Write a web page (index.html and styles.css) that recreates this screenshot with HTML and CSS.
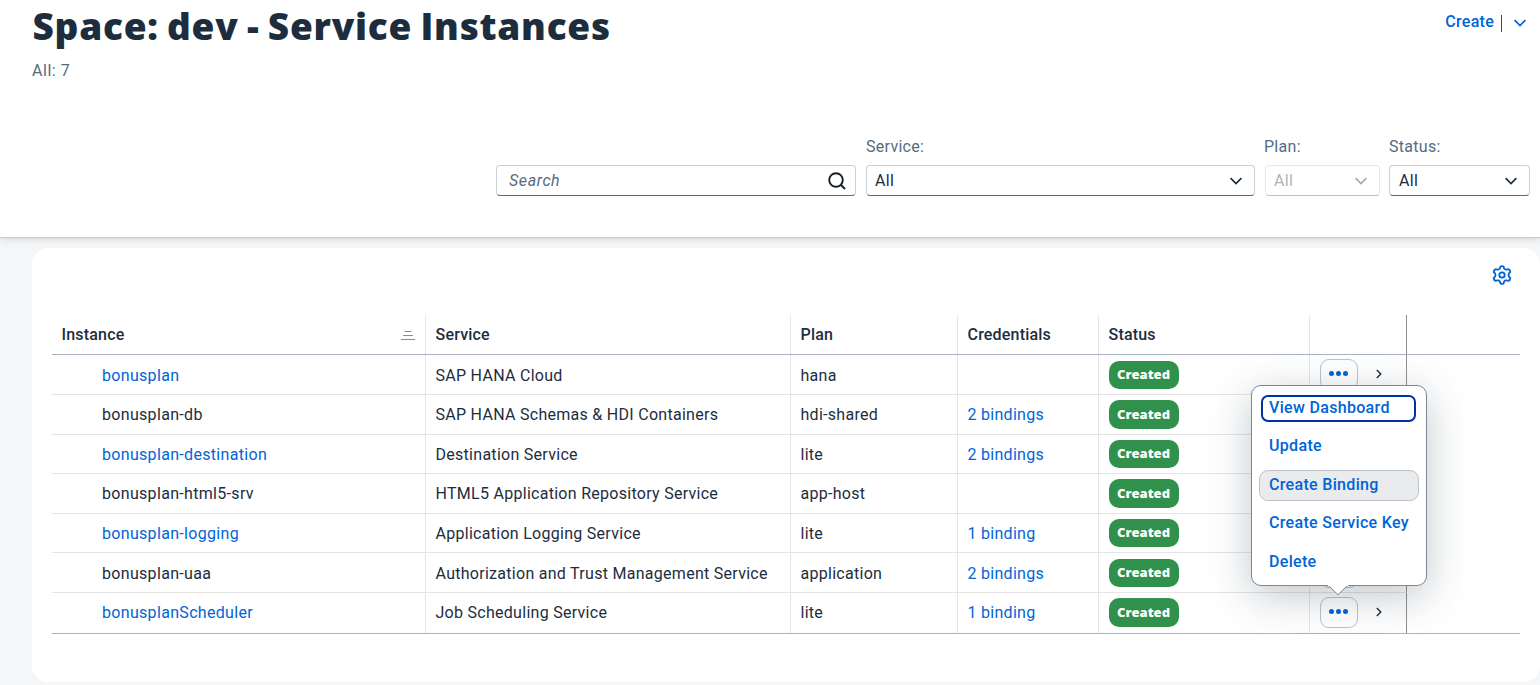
FILE: index.html
```
<!DOCTYPE html>
<html lang="en">
<head>
<meta charset="utf-8">
<title>Space: dev - Service Instances</title>
<link rel="stylesheet" href="styles.css">
</head>
<body>
<header class="page-header">
  <div class="title-row">
    <h1 class="title">Space: dev - Service Instances</h1>
    <div class="create">
      <span class="create-label">Create</span><span class="create-divider"></span>
      <svg class="create-arrow" width="14" height="8" viewBox="0 0 14 8"><path d="M1.6 1.2 7 6.6 12.4 1.2"/></svg>
    </div>
  </div>
  <div class="count">All: 7</div>
  <div class="filters">
    <div class="field search"><span class="placeholder">Search</span>
      <svg class="search-icon" width="18" height="18" viewBox="0 0 18 18"><circle cx="8" cy="8" r="6.8"/><path d="M13 13l4 4"/></svg>
    </div>
    <div class="filter service"><label class="label">Service:</label><div class="field"><span>All</span><svg class="chevron" width="14" height="8" viewBox="0 0 14 8"><path d="M1.6 1.2 7 6.6 12.4 1.2"/></svg></div></div>
    <div class="filter plan"><label class="label">Plan:</label><div class="field disabled"><span>All</span><svg class="chevron" width="14" height="8" viewBox="0 0 14 8"><path d="M1.6 1.2 7 6.6 12.4 1.2"/></svg></div></div>
    <div class="filter status"><label class="label">Status:</label><div class="field"><span>All</span><svg class="chevron" width="14" height="8" viewBox="0 0 14 8"><path d="M1.6 1.2 7 6.6 12.4 1.2"/></svg></div></div>
  </div>
</header>
<main class="panel">
  <div class="toolbar">
    <svg class="gear" width="20" height="20" viewBox="0 0 20 20"><path d="M8.3 1.8 Q10 .4 11.7 1.8 L12.1 3.6 Q13 4.9 14.5 4.6 L16.2 4.1 Q18.2 4.8 18.3 6.9 L17 8.4 Q16 10 17 11.6 L18.3 13.1 Q18.2 15.2 16.2 15.9 L14.5 15.4 Q13 15.1 12.1 16.4 L11.7 18.2 Q10 19.6 8.3 18.2 L7.9 16.4 Q7 15.1 5.5 15.4 L3.8 15.9 Q1.8 15.2 1.7 13.1 L3 11.6 Q4 10 3 8.4 L1.7 6.9 Q1.8 4.8 3.8 4.1 L5.5 4.6 Q7 4.9 7.9 3.6Z"/><circle cx="10" cy="10" r="2.7"/></svg>
  </div>
  <div class="table">
    <div class="row head"><div class="cell">Instance<svg class="sort" width="14" height="9" viewBox="0 0 14 9"><path d="M3.5.5h7M2 4.5h10M0 8.5h14"/></svg></div><div class="cell">Service</div><div class="cell">Plan</div><div class="cell">Credentials</div><div class="cell">Status</div><div class="cell"></div></div>
    <div class="row low"><div class="cell name link">bonusplan</div><div class="cell">SAP HANA Cloud</div><div class="cell">hana</div><div class="cell link"></div><div class="cell state"><span class="tag">Created</span></div><div class="cell actions"><span class="more"><i></i><i></i><i></i></span><svg class="nav" width="6" height="10" viewBox="0 0 6 10"><path d="M.8 1 4.8 5 .8 9"/></svg></div></div>
    <div class="row"><div class="cell name">bonusplan-db</div><div class="cell">SAP HANA Schemas &amp; HDI Containers</div><div class="cell">hdi-shared</div><div class="cell link">2 bindings</div><div class="cell state"><span class="tag tall">Created</span></div><div class="cell"></div></div>
    <div class="row short low"><div class="cell name link">bonusplan-destination</div><div class="cell">Destination Service</div><div class="cell">lite</div><div class="cell link">2 bindings</div><div class="cell state"><span class="tag">Created</span></div><div class="cell"></div></div>
    <div class="row"><div class="cell name">bonusplan-html5-srv</div><div class="cell">HTML5 Application Repository Service</div><div class="cell">app-host</div><div class="cell link"></div><div class="cell state"><span class="tag tall">Created</span></div><div class="cell"></div></div>
    <div class="row short low"><div class="cell name link">bonusplan-logging</div><div class="cell">Application Logging Service</div><div class="cell">lite</div><div class="cell link">1 binding</div><div class="cell state"><span class="tag">Created</span></div><div class="cell"></div></div>
    <div class="row low"><div class="cell name">bonusplan-uaa</div><div class="cell">Authorization and Trust Management Service</div><div class="cell">application</div><div class="cell link">2 bindings</div><div class="cell state"><span class="tag">Created</span></div><div class="cell actions"><span class="more"></span></div></div>
    <div class="row last"><div class="cell name link">bonusplanScheduler</div><div class="cell">Job Scheduling Service</div><div class="cell">lite</div><div class="cell link">1 binding</div><div class="cell state"><span class="tag tall">Created</span></div><div class="cell actions"><span class="more"><i></i><i></i><i></i></span><svg class="nav" width="6" height="10" viewBox="0 0 6 10"><path d="M.8 1 4.8 5 .8 9"/></svg></div></div>
  </div>
</main>
<div class="popover">
  <div class="item focused">View Dashboard</div>
  <div class="item">Update</div>
  <div class="item hovered">Create Binding</div>
  <div class="item">Create Service Key</div>
  <div class="item">Delete</div>
  <svg class="pointer" width="20" height="11" viewBox="0 0 20 11"><path class="pointer-fill" d="M0 0H20V1H18.5L10 9.5 1.5 1H0Z"/><path class="pointer-line" d="M1.3 1.3 10 9.8 18.7 1.3"/></svg>
</div>
</body>
</html>
```
FILE: styles.css
```
* { box-sizing: border-box; }
body { margin: 0; width: 1540px; height: 685px; overflow: hidden; position: relative; background: #f5f6f7; color: #1d2d3e; font: 16px/20px Roboto, "Liberation Sans", sans-serif; letter-spacing: .28px; white-space: nowrap; }
svg { display: block; fill: none; flex: none; }
.page-header { height: 237px; background: #fff; box-shadow: 0 1px 1px #c9cdd2, 0 2px 8px rgba(34,53,72,.16); padding: 0 10px 0 32px; position: relative; }
.title-row { display: flex; justify-content: space-between; height: 60px; }
.title { margin: 4px 0 0 .5px; font: 800 37px/44px "Open Sans", sans-serif; letter-spacing: .75px; word-spacing: -2px; }
.create { display: flex; align-items: center; height: 22px; margin-top: 11px; padding-right: 3px; color: #0064d9; font-weight: 500; }
.create-divider { width: 1px; height: 17px; margin: 3px 11px 0 7px; background: #0057b8; }
.create-arrow { stroke: #0064d9; stroke-width: 1.8; margin-top: 2px; }
.count { height: 20px; padding-top: 1px; color: #556b82; letter-spacing: .55px; }
.filters { display: flex; align-items: flex-end; justify-content: flex-end; margin-top: 56px; height: 60px; }
.label { display: block; height: 28px; color: #556b82; }
.filter { margin-left: 10px; }
.service { width: 389px; }
.plan { width: 115px; }
.plan .label { margin-left: -1px; }
.status { width: 141px; margin-left: 9px; }
.field { display: flex; align-items: center; justify-content: space-between; height: 31px; padding: 0 11px 0 8px; background: #fff; border: 1px solid #c8d0d9; border-bottom-color: #556b82; border-radius: 4px; }
.status .field { padding-left: 9px; }
.search { width: 360px; padding: 0 9px 0 12px; }
.placeholder { color: #556b82; font-style: italic; letter-spacing: .6px; }
.chevron { stroke: #1d2d3e; stroke-width: 1.7; }
.search-icon { stroke: #131e29; stroke-width: 1.9; }
.disabled { color: #b0b3b7; border-color: #e6e9ec; border-bottom-color: #b8c0c8; }
.disabled .chevron { stroke: #a5abb2; }
.panel { margin: 11px 0 0 32px; height: 434px; padding: 17px 20px 0; background: #fff; border-radius: 16px; }
.toolbar { height: 50px; display: flex; justify-content: flex-end; padding: .4px 8px 0 0; }
.gear { stroke: #0064d9; stroke-width: 1.8; }
.table { border-bottom: 1px solid #a8b3bd; height: 319px; }
.row { display: grid; grid-template-columns: 374px 365px 167px 141px 211px 97px; height: 40px; }
.short { height: 39px; }
.head { border-bottom: 1px solid #a8b3bd; font-weight: 500; letter-spacing: .2px; }
.cell { display: flex; align-items: center; padding-left: 9.5px; border-right: 1px solid #e5e5e5; border-bottom: 1px solid #e5e5e5; }
.cell:last-child { border-right-color: #8f8f8f; }
.head .cell, .last .cell { border-bottom: 0; }
.low .cell:not(.state):not(.actions) { padding-top: 2px; }
.cell.name { padding-left: 50px; letter-spacing: .32px; }
.link { color: #0064d9; }
.sort { margin: 1px 10px 0 auto; stroke: #788fa6; stroke-width: 1; }
.tag { width: 70px; height: 28px; margin-left: .5px; padding-right: 1px; border-radius: 10px; background: #30914c; color: #fff; font: 800 13px/27px "Open Sans", sans-serif; text-align: center; letter-spacing: 0; }
.tall { height: 29px; line-height: 29px; }
.more { width: 38px; height: 31px; display: flex; gap: 2px; align-items: center; justify-content: center; border: 1px solid #bcc3ca; border-radius: 9px; }
.more i { width: 5px; height: 5px; border-radius: 50%; background: #0064d9; margin-bottom: 2px; }
.nav { margin: 0 0 1px 18px; stroke: #1d2d3e; stroke-width: 1.4; }
.last .actions, .last .state { padding-bottom: 2px; }
.popover { position: absolute; left: 1251px; top: 385px; width: 176px; height: 201px; padding: 9px 7px; background: #fff; border: 1px solid #7b8793; border-radius: 10px; box-shadow: 0 10px 42px rgba(34,53,72,.28); color: #0064d9; font-weight: 500; display: grid; grid-template-rows: 27px 50px 27px 50px 27px; letter-spacing: .32px; }
.item { display: flex; align-items: center; padding: 0 0 2px 10px; }
.focused { margin: 0 3px 0 2px; padding: 0 0 2px 6px; border: 2px solid #0032a5; border-radius: 7px; }
.hovered { margin: -2px 0; padding: 0 0 1px 9px; border: 1px solid #bcc3ca; border-radius: 9px; background: #eaebec; }
.pointer { position: absolute; left: 76px; bottom: -11px; }
.pointer-fill { fill: #fff; }
.pointer-line { stroke: #7b8793; stroke-width: 1; }
```
